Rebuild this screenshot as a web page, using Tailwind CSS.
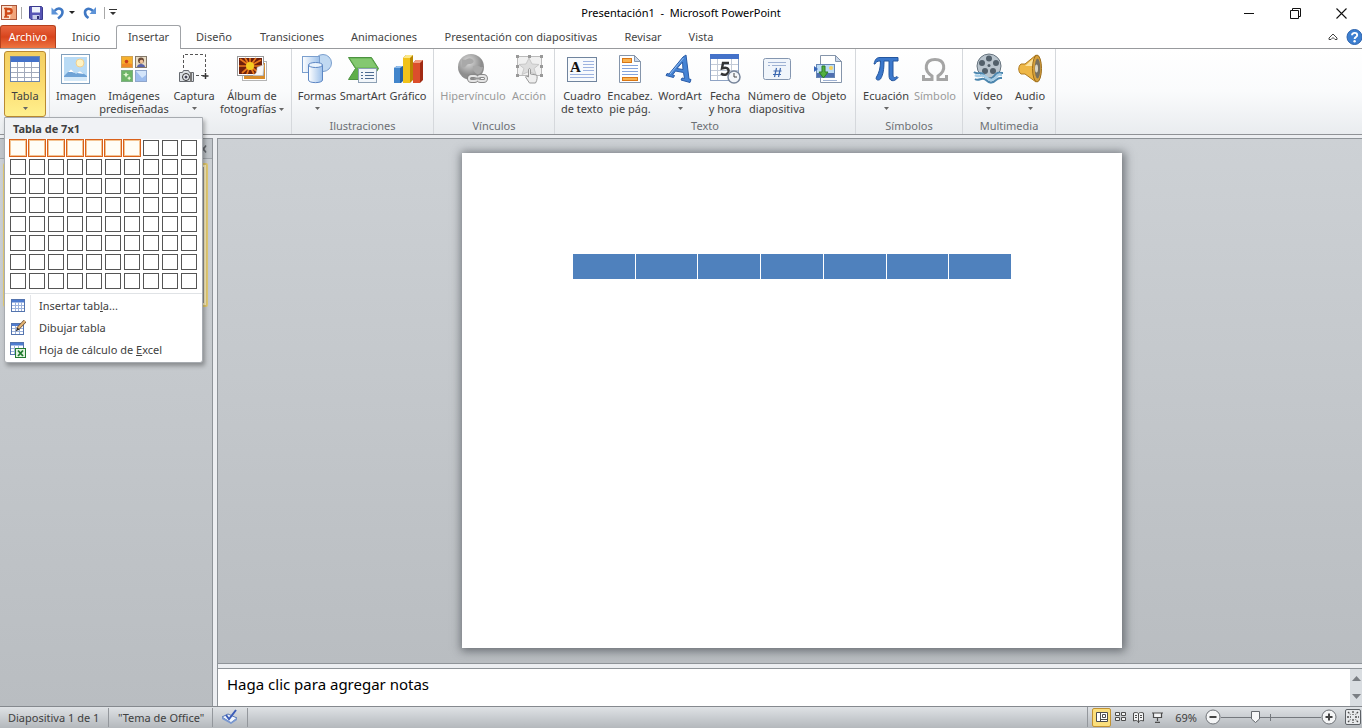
<!DOCTYPE html>
<html lang="es">
<head>
  <meta charset="UTF-8" />
  <meta name="viewport" content="width=device-width, initial-scale=1.0" />
  <title>Presentación1 - Microsoft PowerPoint</title>
  <script src="https://cdn.jsdelivr.net/npm/@tailwindcss/browser@4"></script>
</head>
<body class="h-screen overflow-hidden flex flex-col bg-white font-['Noto_Sans','Open_Sans',sans-serif] text-[11px] leading-[13px] text-[#404040]">

  <!-- Title bar -->
  <header class="h-[25px] shrink-0 flex items-center relative">
    <div class="flex items-center h-[22px]">
      <svg class="w-[18px] h-[18px]" viewBox="0 0 18 18">
        <rect x="1.500" y="1.500" width="15" height="14" fill="#fbe0cc" stroke="#a8553a" />
        <path d="M12 2h4v13h-6z" fill="#f2a57c" />
        <path d="M6 13V5h3c3.500 0 3.500 4.500 0 4.500H7" fill="none" stroke="#cf4a18" stroke-width="2.400" />
        <path d="M4 13h5M4 4.500h3" stroke="#cf4a18" stroke-width="1.500" />
      </svg>
      <span class="w-px h-3 bg-[#a8a8a8] ml-[3px] mr-[7px]"></span>
      <button aria-label="Guardar">
        <svg class="w-[14px] h-[14px]" viewBox="0 0 14 14">
          <path d="M.5.5h12l1 1v12H2l-1.500-1.500z" fill="#5654b4" stroke="#3a3a8e" />
          <rect x="3" y="1" width="8" height="5.500" fill="#eef2fb" />
          <rect x="3.500" y="9" width="7" height="4.500" fill="#c8cdea" />
          <rect x="8" y="10" width="2" height="3" fill="#2d2d70" />
        </svg>
      </button>
      <button aria-label="Deshacer" class="ml-2">
        <svg class="w-[14px] h-[14px]" viewBox="0 0 14 14">
          <path d="M3.500 5c4-4.500 8-2 8 1 0 2.500-1.500 4.500-4.500 6.500" fill="none" stroke="#3f78c4" stroke-width="2.600" />
          <path d="M.5 1.500v7h7z" fill="#5d93d8" />
        </svg>
      </button>
      <svg class="w-[6px] h-[3px] ml-1 mr-2" viewBox="0 0 6 3"><path d="M0 0h6L3 3z" fill="#222" /></svg>
      <button aria-label="Rehacer">
        <svg class="w-[14px] h-[14px]" viewBox="0 0 14 14">
          <path d="M10 5C6 1 2 3 2 6.500c0 2.500 1 4 3.500 5.500" fill="none" stroke="#3f78c4" stroke-width="2.600" />
          <path d="M13 1v7H6.500z" fill="#5d93d8" />
        </svg>
      </button>
      <span class="w-px h-3 bg-[#a8a8a8] ml-[7px] mr-1"></span>
      <button aria-label="Personalizar barra">
        <svg class="w-[8px] h-[7px]" viewBox="0 0 8 7"><path d="M0 0h8v1H0zM1 3h6L4 6z" fill="#333" /></svg>
      </button>
    </div>
    <h1 class="absolute inset-x-0 top-1 text-center leading-[18px] text-black pointer-events-none whitespace-pre">Presentación1  -  Microsoft PowerPoint</h1>
    <div class="ml-auto flex items-center gap-[35px] pr-[15px] pt-[2px]">
      <button aria-label="Minimizar"><svg class="w-[11px] h-[11px]" viewBox="0 0 11 11"><path d="M0 5.500h10" stroke="#111" /></svg></button>
      <button aria-label="Restaurar"><svg class="w-[11px] h-[11px]" viewBox="0 0 11 11"><path d="M.5 2.500h8v8h-8zM2.500 2.500v-2h8v8h-2" fill="none" stroke="#111" /></svg></button>
      <button aria-label="Cerrar"><svg class="w-[11px] h-[11px]" viewBox="0 0 11 11"><path d="M.5.500l10 10M10.500.500l-10 10" stroke="#111" stroke-width="1.100" /></svg></button>
    </div>
  </header>

  <!-- Tabs -->
  <nav class="h-6 shrink-0 flex border-b border-[#989a9d] text-[#444]">
    <button class="w-14 h-[23px] pb-px rounded-t-[3px] border border-b-0 border-[#b5401c] bg-linear-to-b from-[#e8663f] via-[#d8441c] to-[#ee7440] text-white">Archivo</button>
    <button class="w-[60px]">Inicio</button>
    <button class="w-[65px] h-6 pb-[2px] rounded-t-[3px] border border-b-0 border-[#a0a3a7] bg-white">Insertar</button>
    <button class="w-[66px]">Diseño</button>
    <button class="w-[90px]">Transiciones</button>
    <button class="w-[94px]">Animaciones</button>
    <button class="w-[180px]">Presentación con diapositivas</button>
    <button class="w-16">Revisar</button>
    <button class="w-[52px]">Vista</button>
    <div class="ml-auto flex items-center gap-2">
      <button aria-label="Minimizar cinta"><svg class="w-[10px] h-[8px]" viewBox="0 0 10 8"><path d="M1 6.500V5l4-4 4 4v1.500H7L5 4.500l-2 2z" fill="#fff" stroke="#444" /></svg></button>
      <button aria-label="Ayuda">
        <svg class="w-4 h-4" viewBox="0 0 16 16">
          <circle cx="8.500" cy="8" r="7.500" fill="#3d7fd0" stroke="#2b62ad" />
          <path d="M6 6.200c0-3.200 5.200-3 5.200 0 0 1.800-2.600 1.800-2.600 3.800" fill="none" stroke="#fff" stroke-width="1.900" />
          <circle cx="8.600" cy="12.200" r="1.200" fill="#fff" />
        </svg>
      </button>
    </div>
  </nav>

  <!-- Ribbon -->
  <section class="h-[86px] shrink-0 flex bg-linear-to-b from-white via-[#fafbfc] to-[#e9ecef] border-b border-[#8f9296]">
    <div class="w-[50px] pl-1 pt-[2px] border-r border-[#d5d8dc] relative">
      <button class="w-[42px] h-[66px] pt-px flex flex-col items-center rounded-[3px] border border-[#b98a32] bg-linear-to-b from-[#f3cf62] via-[#fbdc70] to-[#fff08e]">
        <svg class="w-8 h-8" viewBox="0 0 32 32">
          <rect x="1.500" y="3.500" width="29" height="25" fill="#fff" stroke="#6c84ad" />
          <rect x="2" y="4" width="28" height="5" fill="#4472c9" />
          <path d="M2 14.500h28M2 19.500h28M2 24.500h28M8.500 9v19M15.500 9v19M22.500 9v19" stroke="#a2aabb" />
        </svg>
        <span class="mt-1">Tabla</span>
        <svg class="w-[5px] h-[3px] mt-[5px]" viewBox="0 0 5 3"><path d="M0 0h5L2.500 3z" fill="#666" /></svg>
      </button>

      <!-- Table drop-down -->
      <div class="absolute left-1 top-[68px] z-10 w-[199px] pb-px border border-[#a7abb0] rounded-b-[3px] bg-white shadow-[2px_3px_4px_rgba(0,0,0,0.3)]">
        <h2 id="gridTitle" class="h-[21px] pl-2 leading-[21px] font-bold bg-[#f0f2f5]">Tabla de 7x1</h2>
        <div id="grid" class="grid grid-cols-10 gap-[3px] w-[187px] ml-[5px] pt-px"></div>
        <div class="mt-1 border-t border-[#e0e3e6]">
          <button class="w-full h-[22px] mt-px flex items-center">
            <svg class="w-4 h-4 ml-[5px]" viewBox="0 0 16 16">
              <rect x="1.500" y="1.500" width="13" height="12" fill="#fff" stroke="#5474ae" />
              <rect x="2" y="2" width="12" height="2.500" fill="#4f7cd0" />
              <path d="M2 7.500h12M2 10.500h12M5.500 4v9M8.500 4v9M11.500 4v9" stroke="#9db3dc" />
            </svg>
            <span class="ml-1 pl-2 h-full leading-[22px] border-l border-[#e4e6e9]">Insertar tab<u>l</u>a...</span>
          </button>
          <button class="w-full h-[22px] flex items-center">
            <svg class="w-4 h-4 ml-[5px]" viewBox="0 0 16 16">
              <rect x="1.500" y="3.500" width="12" height="11" fill="#fff" stroke="#5474ae" />
              <rect x="2" y="4" width="11" height="2" fill="#4f7cd0" />
              <path d="M2 8.500h11M2 11.500h11M5.500 6v8M9.500 6v8" stroke="#9db3dc" />
              <path d="M15 1L7.500 9" stroke="#6f5236" stroke-width="3.400" />
              <path d="M15 1L8 8.500" stroke="#e3b474" stroke-width="2" />
              <path d="M7.500 7.500l-2 4 4-2z" fill="#2b2b2b" />
            </svg>
            <span class="ml-1 pl-2 h-full leading-[22px] border-l border-[#e4e6e9]">Dibu<u>j</u>ar tabla</span>
          </button>
          <button class="w-full h-[22px] flex items-center">
            <svg class="w-4 h-4 ml-[5px]" viewBox="0 0 16 16">
              <rect x=".5" y=".5" width="13" height="12" fill="#fff" stroke="#5474ae" />
              <rect x="1" y="1" width="12" height="2.500" fill="#4f7cd0" />
              <path d="M1 6.500h12M1 9.500h12M4.500 4v8M8.500 4v8" stroke="#9db3dc" />
              <rect x="5.500" y="6.500" width="10" height="9" fill="#e2f3df" stroke="#237a31" />
              <path d="M8 8.500l5 5.500M13 8.500L8 14" stroke="#1d7a2c" stroke-width="1.800" />
            </svg>
            <span class="ml-1 pl-2 h-full leading-[22px] border-l border-[#e4e6e9]">Hoja de cálculo de <u>E</u>xcel</span>
          </button>
        </div>
      </div>
    </div>

    <div class="w-[242px] px-1 pt-1 border-r border-[#d5d8dc] flex items-start">
      <button class="w-11 flex flex-col items-center whitespace-nowrap">
        <svg class="w-8 h-8" viewBox="0 0 32 32">
          <rect x="1.500" y="1.500" width="28" height="29" fill="#fff" stroke="#7f9fbd" />
          <rect x="4" y="4" width="23" height="24" fill="#b9dbf5" />
          <circle cx="20" cy="10" r="4" fill="#fff3c2" stroke="#f1cf8d" />
          <path d="M4 23l7-7 5 5 4-3 7 5v3H4z" fill="#6fa3d6" />
          <path d="M8 19l3-3 4 4-3-1zM17 20l3-2 4 3z" fill="#fff" />
          <rect x="4" y="24" width="23" height="4" fill="#d5e9f8" />
        </svg>
        <span class="mt-1">Imagen</span>
      </button>
      <button class="w-[72px] flex flex-col items-center whitespace-nowrap">
        <svg class="w-8 h-8" viewBox="0 0 32 32">
          <rect x="3.500" y="3.500" width="11" height="11" fill="#f6b02c" stroke="#cfa255" />
          <path d="M4 11l5-1 5 1v3H4z" fill="#f08a2a" /><circle cx="8.500" cy="8.500" r="1.800" fill="#c93b1c" />
          <rect x="17.500" y="3.500" width="11" height="11" fill="#e8dcc4" stroke="#84786a" />
          <circle cx="23" cy="7.500" r="3" fill="#6b4a38" /><circle cx="23.500" cy="8.500" r="1.800" fill="#f0c39a" /><path d="M19 14c0-4 8-4 8 0z" fill="#5760a8" />
          <rect x="3.500" y="17.500" width="11" height="11" fill="#6db567" stroke="#7fae85" />
          <path d="M8 19l1 2 2 .5-2 1-1 2-1-2-2-1 2-.5zM11 23l1 1.500L13 25l-1 1-1 1.500-.5-1.500-1.500-1 1.500-.5z" fill="#e6f8d6" />
          <rect x="17.500" y="17.500" width="11" height="11" fill="#d4e5fa" stroke="#8fa6cc" />
          <path d="M18 18l6 7 4-3v6H18z" fill="#9dbdee" />
        </svg>
        <span class="mt-1">Imágenes<br />prediseñadas</span>
      </button>
      <button class="w-12 flex flex-col items-center whitespace-nowrap">
        <svg class="w-8 h-8" viewBox="0 0 32 32">
          <path d="M5.500 15V1.500h22V22M18 22.500h8" fill="none" stroke="#555" stroke-dasharray="3 2" />
          <path d="M27.500 20v6M24.500 23h6" stroke="#333" stroke-width="1.500" />
          <path d="M1.500 19.500h3l1-2h5l1 2h4v9h-14z" fill="#dbdfe3" stroke="#666a70" />
          <circle cx="8" cy="24" r="3.500" fill="#eef2f5" stroke="#333" /><circle cx="8" cy="24" r="1.500" fill="#445" />
          <path d="M13 19v10" stroke="#777" stroke-width="2" />
        </svg>
        <span class="mt-1">Captura</span>
        <svg class="w-[5px] h-[3px] mt-[5px]" viewBox="0 0 5 3"><path d="M0 0h5L2.500 3z" fill="#666" /></svg>
      </button>
      <button class="w-[68px] flex flex-col items-center whitespace-nowrap">
        <svg class="w-8 h-8" viewBox="0 0 32 32">
          <rect x="6.500" y="8.500" width="24" height="19" fill="#fff" stroke="#b4b4b4" />
          <rect x="8" y="10" width="21" height="16" fill="#d88c2a" />
          <rect x="1.500" y="3.500" width="26" height="19" fill="#fff" stroke="#999" />
          <rect x="3" y="5" width="23" height="16" fill="#6e200c" />
          <path d="M14 13L4 6M14 13L9 5M14 13V5M14 13l6-8M14 13l11-6M14 13l11 0M14 13l9 7M14 13l4 8M14 13l-3 8M14 13l-8 7M14 13H3" stroke="#e8781c" stroke-width="1.700" />
          <circle cx="14" cy="13" r="4" fill="#f4cc20" />
          <path d="M17 22.500c4-2 4-5 4-8l7-3-1 11z" fill="#f7f7f7" stroke="#bbb" stroke-width=".6" />
        </svg>
        <span class="mt-1">Álbum de<br />fotografías <svg class="inline w-[5px] h-[3px] mb-px" viewBox="0 0 5 3"><path d="M0 0h5L2.500 3z" fill="#666" /></svg></span>
      </button>
    </div>

    <div class="w-[142px] px-1 pt-1 border-r border-[#d5d8dc] flex flex-col justify-between">
      <div class="flex items-start">
        <button class="w-[42px] flex flex-col items-center whitespace-nowrap">
          <svg class="w-8 h-8" viewBox="0 0 32 32">
            <defs><linearGradient id="blueFill"><stop stop-color="#fff" /><stop offset="1" stop-color="#9cc0ea" /></linearGradient></defs>
            <circle cx="22" cy="10" r="8.500" fill="#c0d9f2" stroke="#7b9fce" />
            <rect x="1.500" y="3.500" width="17" height="16" fill="url(#blueFill)" stroke="#7b9fce" />
            <path d="M7.500 12v15c0 3.500 14 3.500 14 0V12" fill="url(#blueFill)" stroke="#5d87c4" />
            <ellipse cx="14.500" cy="12" rx="7" ry="2.500" fill="#e9f3fd" stroke="#5d87c4" />
          </svg>
          <span class="mt-1">Formas</span>
          <svg class="w-[5px] h-[3px] mt-[5px]" viewBox="0 0 5 3"><path d="M0 0h5L2.500 3z" fill="#666" /></svg>
        </button>
        <button class="w-[50px] flex flex-col items-center whitespace-nowrap">
          <svg class="w-8 h-8" viewBox="0 0 32 32">
            <path d="M1.500 4.500h23l7 11-7 11h-23l7-11z" fill="#5fae4a" stroke="#4c9240" />
            <path d="M3 5.500h21l6 9H9z" fill="#84c870" />
            <rect x="11.500" y="15.500" width="18" height="14" fill="#f2f6fa" stroke="#8da0b4" />
            <path d="M14 19.500h2m2 0h9M14 22.500h2m2 0h9M14 25.500h2m2 0h9" stroke="#4e6c92" />
          </svg>
          <span class="mt-1">SmartArt</span>
        </button>
        <button class="w-10 flex flex-col items-center whitespace-nowrap">
          <svg class="w-8 h-8" viewBox="0 0 32 32">
            <path d="M2 15l3-2h6v15l-2 2H2z" fill="#245fa3" /><path d="M2 15h6v15H2z" fill="#4185cb" /><path d="M2 15l3-2h6l-3 2z" fill="#8fbdec" />
            <path d="M11 5l3-3h7v25l-3 3h-7z" fill="#b98600" /><path d="M11 5h7v25h-7z" fill="#f1c21a" /><path d="M11 5l3-3h7l-3 3z" fill="#fbe88a" />
            <path d="M21 10l3-3h7v20l-3 3h-7z" fill="#a12a12" /><path d="M21 10h7v20h-7z" fill="#dc4e2c" /><path d="M21 10l3-3h7l-3 3z" fill="#f39c80" />
          </svg>
          <span class="mt-1">Gráfico</span>
        </button>
      </div>
      <h3 class="text-center mb-[2px] text-[#6c7075]">Ilustraciones</h3>
    </div>

    <div class="w-[121px] px-1 pt-1 border-r border-[#d5d8dc] flex flex-col justify-between">
      <div class="flex items-start text-[#9a9a9a]">
        <button class="w-[70px] flex flex-col items-center whitespace-nowrap">
          <svg class="w-8 h-8" viewBox="0 0 32 32">
            <defs><radialGradient id="globe" cx=".4" cy=".3"><stop stop-color="#ddd" /><stop offset="1" stop-color="#8e8e8e" /></radialGradient></defs>
            <circle cx="14" cy="14" r="13" fill="url(#globe)" />
            <path d="M5 6c4 3 6-3 10 0s0 5-3 5-3 5-7 3zM16 13c5-2 7 2 10 1-1 6-4 8-6 7s-5-4-4-8z" fill="#a9a9a9" />
            <g fill="none" stroke="#888" stroke-width="4"><rect x="12" y="23" width="8" height="5" rx="2.500" /><rect x="21" y="23" width="8" height="5" rx="2.500" /></g>
            <g fill="none" stroke="#e4e4e4" stroke-width="2"><rect x="12" y="23" width="8" height="5" rx="2.500" /><rect x="21" y="23" width="8" height="5" rx="2.500" /></g>
            <path d="M17 25.500h7" stroke="#999" stroke-width="2" />
          </svg>
          <span class="mt-1">Hipervínculo</span>
        </button>
        <button class="w-[42px] flex flex-col items-center whitespace-nowrap">
          <svg class="w-8 h-8" viewBox="0 0 32 32">
            <rect x="4.500" y="3.500" width="24" height="19" fill="#f0f0f0" stroke="#bbb" />
            <path d="M16 5l3 6 7 .5-5 4 2 6-7-3-7 3 2-6-5-4 7-.5z" fill="#ddd" stroke="#c8c8c8" />
            <path d="M3 2h3v3H3zM15 2h3v3h-3zM27 2h3v3h-3zM3 12h3v3H3zM27 12h3v3h-3zM3 21h3v3H3zM27 21h3v3h-3z" fill="#999" />
            <path d="M15.500 17c0-2 2-2 2 0v4l6 1c1 1 1 5-1 8h-6l-4-6 1-1 2 1z" fill="#eee" stroke="#999" />
          </svg>
          <span class="mt-1">Acción</span>
        </button>
      </div>
      <h3 class="text-center mb-[2px] text-[#6c7075]">Vínculos</h3>
    </div>

    <div class="w-[301px] px-1 pt-1 border-r border-[#d5d8dc] flex flex-col justify-between">
      <div class="flex items-start">
        <button class="w-[46px] flex flex-col items-center whitespace-nowrap">
          <svg class="w-8 h-8" viewBox="0 0 32 32">
            <rect x="1.500" y="4.500" width="29" height="24" fill="#f7fafd" stroke="#70849e" />
            <text x="4" y="19" font-family="Liberation Serif" font-weight="bold" font-size="15" fill="#111">A</text>
            <path d="M17 8.500h11M17 11.500h11M17 14.500h11M17 17.500h11M4 21.500h24M4 24.500h24" stroke="#9db3e0" />
          </svg>
          <span class="mt-1">Cuadro<br />de texto</span>
        </button>
        <button class="w-[50px] flex flex-col items-center whitespace-nowrap">
          <svg class="w-8 h-8" viewBox="0 0 32 32">
            <path d="M5.500 2.500h15l6 6v21h-21z" fill="#fff" stroke="#8595ab" /><path d="M20.500 2.500v6h6z" fill="#cad7ea" stroke="#8595ab" />
            <rect x="8.500" y="5.500" width="9" height="4" fill="#f9b250" stroke="#d97716" />
            <path d="M8 12.500h16M8 15.500h16M8 18.500h16M8 21.500h16" stroke="#86a4dc" />
            <rect x="8.500" y="24.500" width="15" height="3" fill="#f9b250" stroke="#d97716" />
          </svg>
          <span class="mt-1">Encabez.<br />pie pág.</span>
        </button>
        <button class="w-[50px] flex flex-col items-center whitespace-nowrap">
          <svg class="w-8 h-8" viewBox="0 0 32 32">
            <path d="M22 2l3 24 2 .5-1 3-9-2.500 1-2 2.500.5-1-6-8-1.500-3 4 2 .5-1 2-7.500-2 1-2 2 .5L19 4zM18.500 9L13 15.500l6 1z" fill="#4583d4" stroke="#2a5ca8" />
            <path d="M19.500 5L6 21" stroke="#8fbcf0" />
          </svg>
          <span class="mt-1">WordArt</span>
          <svg class="w-[5px] h-[3px] mt-[5px]" viewBox="0 0 5 3"><path d="M0 0h5L2.500 3z" fill="#666" /></svg>
        </button>
        <button class="w-10 flex flex-col items-center whitespace-nowrap">
          <svg class="w-8 h-8" viewBox="0 0 32 32">
            <rect x="1.500" y="2.500" width="28" height="25" fill="#fff" stroke="#8ea3c4" />
            <rect x="1" y="1" width="29" height="5" fill="#4472c9" />
            <path d="M2 11.500h27M2 17.500h27M2 22.500h27M8.500 6v21M22.500 6v21" stroke="#c3cbd8" />
            <path d="M20 10h-6l-1 5.500c4-1.500 7-.5 6.500 3-.5 3-4 4.500-7.500 2" fill="none" stroke="#333" stroke-width="2.400" />
            <circle cx="25" cy="24" r="6" fill="#f3f6fa" stroke="#76849a" stroke-width="1.500" /><path d="M25 20v4h3" fill="none" stroke="#444" />
          </svg>
          <span class="mt-1">Fecha<br />y hora</span>
        </button>
        <button class="w-16 flex flex-col items-center whitespace-nowrap">
          <svg class="w-8 h-8" viewBox="0 0 32 32">
            <rect x="2.500" y="5.500" width="27" height="21" rx="2" fill="#f0f5fb" stroke="#8496b0" />
            <path d="M7 9.500h18M7 12.500h2m2 0h14" stroke="#9fb2d3" />
            <path d="M15.500 15l-2 9M19.500 15l-2 9M12.500 18h8M12 21.500h8" stroke="#3c68b0" stroke-width="1.200" />
          </svg>
          <span class="mt-1">Número de<br />diapositiva</span>
        </button>
        <button class="w-10 flex flex-col items-center whitespace-nowrap">
          <svg class="w-8 h-8" viewBox="0 0 32 32">
            <path d="M7.500 2.500h15l6 6v21h-21z" fill="#fff" stroke="#8595ab" /><path d="M22.500 2.500v6h6z" fill="#cad7ea" stroke="#8595ab" />
            <rect x="3.500" y="11.500" width="18" height="13" fill="#bcdcf6" stroke="#6687b4" />
            <path d="M4 20h17v4H4z" fill="#4f6fb0" /><circle cx="18" cy="15" r="2" fill="#f7d35c" />
            <path d="M9 13h3v6h3l-4.500 6L6 19h3z" fill="#52b040" stroke="#2d7d27" />
            <path d="M1 13l4 3-4 3z" fill="#3664b6" />
            <path d="M10 27.500h14" stroke="#9fb2d3" />
          </svg>
          <span class="mt-1">Objeto</span>
        </button>
      </div>
      <h3 class="text-center mb-[2px] text-[#6c7075]">Texto</h3>
    </div>

    <div class="w-[107px] px-1 pt-1 border-r border-[#d5d8dc] flex flex-col justify-between">
      <div class="flex items-start">
        <button class="w-[52px] flex flex-col items-center whitespace-nowrap">
          <svg class="w-8 h-8" viewBox="0 0 32 32">
            <path d="M4 11c1-4 2-6.500 6-6.500h18V8h-5v14c0 3 2 3 4 1.500l1 1c-4 5-9 4-9-2V8h-5c0 9-1 14-3.500 18-2 2-5.500 1-4-2C9 20 10.500 15 10.500 8 7 8 6 9 5 11z" fill="#3b78cc" stroke="#24569e" />
          </svg>
          <span class="mt-1">Ecuación</span>
          <svg class="w-[5px] h-[3px] mt-[5px]" viewBox="0 0 5 3"><path d="M0 0h5L2.500 3z" fill="#666" /></svg>
        </button>
        <button class="w-[46px] flex flex-col items-center whitespace-nowrap text-[#9a9a9a]">
          <svg class="w-8 h-8" viewBox="0 0 32 32">
            <path d="M4.500 22v4.500H13V23C4 17 6 6.500 16 6.500S28 17 19 23v3.500h8.500V22" fill="none" stroke="#a5a5a5" stroke-width="3" />
          </svg>
          <span class="mt-1">Símbolo</span>
        </button>
      </div>
      <h3 class="text-center mb-[2px] text-[#6c7075]">Símbolos</h3>
    </div>

    <div class="w-[93px] px-1 pt-1 border-r border-[#d5d8dc] flex flex-col justify-between">
      <div class="flex items-start">
        <button class="w-[42px] flex flex-col items-center whitespace-nowrap">
          <svg class="w-8 h-8" viewBox="0 0 32 32">
            <circle cx="17" cy="13" r="12" fill="#b9c4cd" stroke="#66737e" />
            <g fill="#53606b"><circle cx="17" cy="5.500" r="3" /><circle cx="10" cy="10" r="3" /><circle cx="24" cy="10" r="3" /><circle cx="13" cy="18" r="3" /><circle cx="21" cy="18" r="3" /><circle cx="17" cy="12.500" r="1.500" /></g>
            <path d="M2 19c3 3 7-1 10 3s6 6 10 1 5-3 9-3M3 26c4 3 7-3 11 1s7 3 10 0 4-2 6-2" fill="none" stroke="#4c86ae" stroke-width="2" />
            <path d="M3 22c4 3 7-2 11 2s7 4 10 0 4-2 6-2" fill="none" stroke="#a6cde6" stroke-width="2.500" />
          </svg>
          <span class="mt-1">Vídeo</span>
          <svg class="w-[5px] h-[3px] mt-[5px]" viewBox="0 0 5 3"><path d="M0 0h5L2.500 3z" fill="#666" /></svg>
        </button>
        <button class="w-[42px] flex flex-col items-center whitespace-nowrap">
          <svg class="w-8 h-8" viewBox="0 0 32 32">
            <path d="M7 11h4L22 2v27L11 21H7c-3-2-3-8 0-10z" fill="#eeb746" stroke="#ae7a21" />
            <path d="M11 13l9-8v8z" fill="#fbe3a0" />
            <ellipse cx="23" cy="15.500" rx="4.500" ry="13.500" fill="#d7a03a" stroke="#9a6c1c" />
            <ellipse cx="23.500" cy="15.500" rx="2.800" ry="10" fill="#77705f" />
            <ellipse cx="22.500" cy="15.500" rx="1.500" ry="4" fill="#d9d4c5" />
          </svg>
          <span class="mt-1">Audio</span>
          <svg class="w-[5px] h-[3px] mt-[5px]" viewBox="0 0 5 3"><path d="M0 0h5L2.500 3z" fill="#666" /></svg>
        </button>
      </div>
      <h3 class="text-center mb-[2px] text-[#6c7075]">Multimedia</h3>
    </div>
  </section>

  <!-- Workspace -->
  <main class="flex-1 min-h-0 flex pt-[3px] bg-[#eceef1]">
    <aside class="w-[213px] shrink-0 border-t border-r border-[#8f9499] bg-linear-to-b from-[#cdd1d5] to-[#b9bdc1]">
      <div class="h-5 flex items-center justify-end pr-[5px] border-b border-[#a0a5aa] bg-[#bfc4c9]">
        <button aria-label="Cerrar panel"><svg class="w-[7px] h-[8px]" viewBox="0 0 7 8"><path d="M1 .5l5 7M6 .5l-5 7" stroke="#666a70" stroke-width="1.500" /></svg></button>
      </div>
      <div class="mt-1 ml-[3px] mr-1 h-[144px] rounded-[2px] border-2 border-[#e6cd72] bg-[#fff3c4] p-[2px]">
        <div class="h-full bg-white border border-[#9a9a9a]"></div>
      </div>
    </aside>

    <div class="flex-1 min-w-0 ml-1 flex flex-col gap-1 border-l border-[#8f9499]">
      <div class="flex-1 min-h-0 pt-[14px] pb-[15px] flex justify-center border-y border-[#8f9499] bg-linear-to-b from-[#cdd1d5] to-[#b9bdc1]">
        <div class="h-full aspect-4/3 ml-1 bg-white shadow-[1px_1px_9px_2px_rgba(60,64,70,0.65)] pt-[100px] px-[110px]">
          <table class="w-full h-[27px] table-fixed border-collapse">
            <tr class="bg-[#4f81bd]">
              <td class="border border-white"></td>
              <td class="border border-white"></td>
              <td class="border border-white"></td>
              <td class="border border-white"></td>
              <td class="border border-white"></td>
              <td class="border border-white"></td>
              <td class="border border-white"></td>
            </tr>
          </table>
        </div>
      </div>
      <div class="h-[38px] shrink-0 flex border-t border-[#8f9499] bg-white">
        <textarea aria-label="Notas" class="flex-1 resize-none overflow-hidden outline-none pl-[9px] pt-1 text-[15px] leading-[22px] text-black placeholder:text-black" placeholder="Haga clic para agregar notas"></textarea>
        <div class="w-3 flex flex-col justify-between items-center py-[7px] bg-[#d9dde1]">
          <svg class="w-[9px] h-[5px]" viewBox="0 0 9 5"><path d="M0 5h9L4.500 0z" fill="#7a7e83" /></svg>
          <svg class="w-[9px] h-[5px]" viewBox="0 0 9 5"><path d="M0 0h9L4.500 5z" fill="#7a7e83" /></svg>
        </div>
      </div>
    </div>
  </main>

  <!-- Status bar -->
  <footer class="h-[22px] shrink-0 flex items-center pb-px border-t border-[#85898e] bg-linear-to-b from-[#dfe2e5] via-[#c9cdd1] to-[#b4b8bc]">
    <span class="w-[109px] h-[19px] pl-2 leading-[19px] border-r border-[#93979c]">Diapositiva 1 de 1</span>
    <span class="w-[104px] h-[19px] pl-[9px] leading-[19px] border-r border-[#93979c]">"Tema de Office"</span>
    <button aria-label="Ortografía" class="w-[35px] h-[19px] pr-[2px] flex justify-center items-center border-r border-[#93979c]">
      <svg class="w-[17px] h-[16px]" viewBox="0 0 17 16">
        <path d="M1 8l6-3 9 4-6 5z" fill="#f1f6fd" stroke="#5676b4" /><path d="M1 8v2l9 5 6-4V9l-6 4z" fill="#7a98d0" />
        <path d="M5 6l3 4 7-9" fill="none" stroke="#3b5cb8" stroke-width="2" />
      </svg>
    </button>
    <div class="ml-auto flex items-center h-full border-l border-[#93979c] pl-1">
      <button aria-label="Normal" class="w-[19px] h-[19px] flex items-center justify-center rounded-[2px] border border-[#c29232] bg-[#fbdf7c]">
        <svg class="w-3 h-[10px]" viewBox="0 0 12 10"><path d="M.5.5h11v9H.5zM4.500 0v10M6.500 2.500h3v3h-3zM5 7.500h6" fill="#fff" stroke="#4c4c4c" /></svg>
      </button>
      <button aria-label="Clasificador de diapositivas" class="ml-1">
        <svg class="w-[11px] h-[10px]" viewBox="0 0 11 10"><path d="M.5.500h4v3h-4zM6.500.500h4v3h-4zM.5 5.500h4v3h-4zM6.500 5.500h4v3h-4z" fill="#f2f3f4" stroke="#4c4c4c" /></svg>
      </button>
      <button aria-label="Vista de lectura" class="ml-[7px]">
        <svg class="w-[11px] h-[11px]" viewBox="0 0 11 11"><path d="M.5 1C3 0 4.500.500 5.500 1.500 6.500.500 8 0 10.500 1v8C8 8 6.500 8.500 5.500 10 4.500 8.500 3 8 .5 9zM5.500 1.500V11M2 3.500h2M2 5.500h2M7 3.500h2M7 5.500h2" fill="#f2f3f4" stroke="#4c4c4c" /></svg>
      </button>
      <button aria-label="Presentación" class="ml-2">
        <svg class="w-[11px] h-[11px]" viewBox="0 0 11 11"><path d="M0 1h11M1.500 1v4.500h8V1M5.500 5.500V9M3 10.300h5" fill="#f2f3f4" stroke="#4c4c4c" stroke-width="1.200" /></svg>
      </button>
      <button class="w-[42px] pl-1 text-center">69%</button>
      <button aria-label="Alejar">
        <svg class="w-4 h-4" viewBox="0 0 16 16"><circle cx="8" cy="8" r="7" fill="#f4f5f6" stroke="#6e7277" /><path d="M4.500 8h7" stroke="#444" stroke-width="2" /></svg>
      </button>
      <div class="w-[100px] h-4 flex items-center relative">
        <input type="range" aria-label="Zoom" min="0" max="100" value="34" class="absolute inset-0 w-full h-full m-0 opacity-0" />
        <svg class="w-full h-4 pointer-events-none" viewBox="0 0 100 16">
          <path d="M0 8.500h100" stroke="#74787d" /><path d="M49.500 5v7" stroke="#74787d" />
          <path d="M30.500 2.500h8v7.500l-4 3.500-4-3.500z" fill="#f6f7f8" stroke="#65696e" />
        </svg>
      </div>
      <button aria-label="Acercar">
        <svg class="w-4 h-4" viewBox="0 0 16 16"><circle cx="8" cy="8" r="7" fill="#f4f5f6" stroke="#6e7277" /><path d="M4.500 8h7M8 4.500v7" stroke="#444" stroke-width="2" /></svg>
      </button>
      <button aria-label="Ajustar a la ventana" class="ml-2 mr-px">
        <svg class="w-4 h-4" viewBox="0 0 16 16">
          <rect x=".5" y=".5" width="15" height="15" rx="1.500" fill="#e8eaec" stroke="#5c6065" />
          <path d="M8 2v4M8 10v4M2 8h4M10 8h4M3 3l2.500 2.500M13 3l-2.500 2.500M3 13l2.500-2.500M13 13l-2.500-2.500" stroke="#4c4c4c" stroke-dasharray="2 1" stroke-width="1.300" />
        </svg>
      </button>
    </div>
  </footer>

  <script>
    const grid = document.getElementById("grid");
    const title = document.getElementById("gridTitle");
    const plain = "w-4 h-4 border border-[#555] bg-white";
    const picked = "w-4 h-4 border border-[#f3c493] bg-[#fffdf6] outline outline-[#d9611a]";

    function paint(cols, rows) {
      [...grid.children].forEach((cell, i) => {
        const on = i % 10 < cols && Math.floor(i / 10) < rows;
        cell.className = on ? picked : plain;
      });
      title.textContent = `Tabla de ${cols}x${rows}`;
    }

    for (let i = 0; i < 80; i++) {
      const cell = document.createElement("button");
      const col = (i % 10) + 1;
      const row = Math.floor(i / 10) + 1;
      cell.setAttribute("aria-label", `${col}x${row}`);
      cell.addEventListener("mouseenter", () => paint(col, row));
      grid.appendChild(cell);
    }

    paint(7, 1);
  </script>
</body>
</html>
